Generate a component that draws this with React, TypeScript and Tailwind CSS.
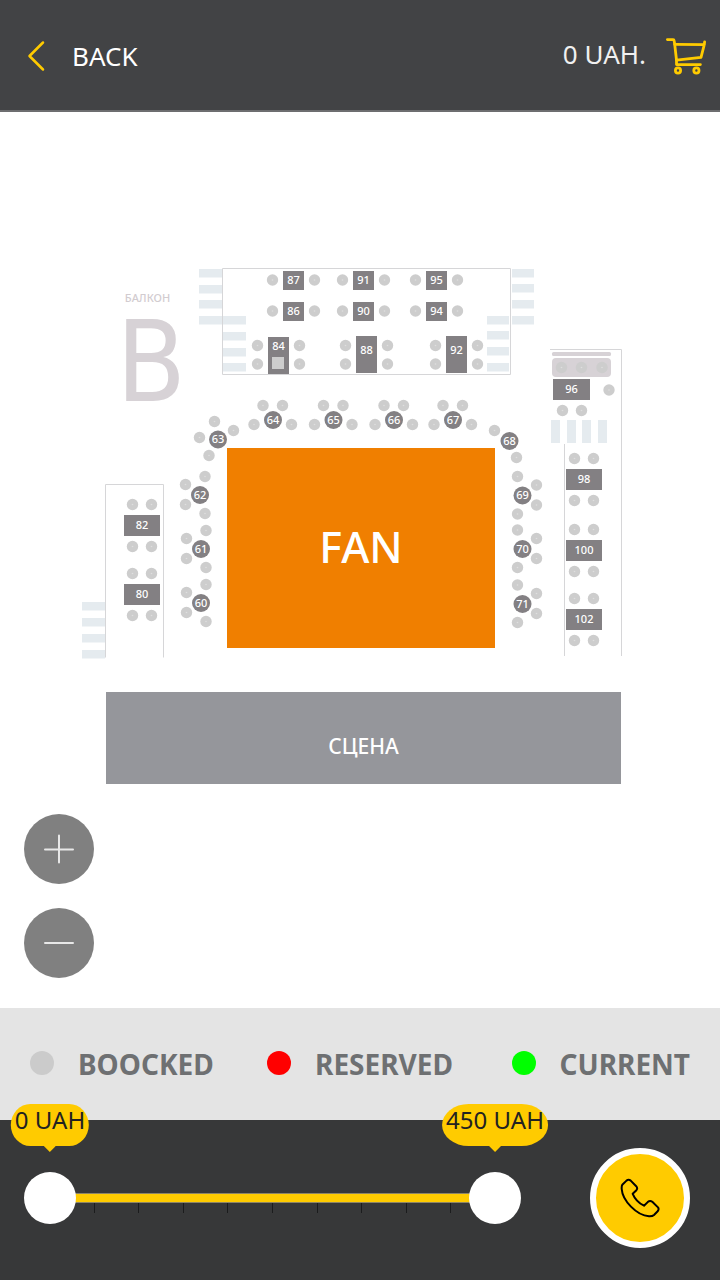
import { useState } from "react";

type Point = [number, number];

interface BoxTable {
  id: number;
  x: number;
  y: number;
  w: number;
  h: number;
  labelY?: number;
  seats: Point[];
}

interface RoundTable {
  id: number;
  x: number;
  y: number;
  seats: Point[];
}

const MAX_PRICE = 450;
const TICKS = [1, 2, 3, 4, 5, 6, 7, 8, 9];

const row = (id: number, x: number, y: number): BoxTable => ({
  id, x, y, w: 21, h: 19,
  seats: [[x - 10.5, y + 9], [x + 31.5, y + 9]],
});

const tall = (id: number, x: number, y: number): BoxTable => ({
  id, x, y, w: 21, h: 37, labelY: id === 84 ? 346 : 350,
  seats: [[x - 10.5, 345.5], [x + 31.5, 345.5], [x - 10.5, 364], [x + 31.5, 364]],
});

const wide = (id: number, x: number, y: number): BoxTable => ({
  id, x, y, w: 36, h: 21,
  seats: [[x + 8.5, y - 10.5], [x + 27.5, y - 10.5], [x + 8.5, y + 31.5], [x + 27.5, y + 31.5]],
});

const boxTables: BoxTable[] = [
  row(87, 283, 271), row(91, 353, 271), row(95, 426, 271),
  row(86, 283, 302), row(90, 353, 302), row(94, 426, 302),
  tall(84, 268, 337), tall(88, 356, 336), tall(92, 446, 336),
  wide(82, 124, 515), wide(80, 124, 584),
  wide(98, 566, 469), wide(100, 566, 540), wide(102, 566, 609),
  {
    id: 96, x: 553, y: 379, w: 37, h: 21,
    seats: [[561.5, 367.5], [581.5, 367.5], [602, 367.5], [609, 390], [562.5, 410.5], [581.5, 410.5]],
  },
];

const top = (id: number, x: number): RoundTable => ({
  id, x, y: 420,
  seats: [[x - 10, 405.5], [x + 9.5, 405.5], [x - 19, 424.5], [x + 18.5, 424.5]],
});

const left = (id: number, x: number, y: number): RoundTable => ({
  id, x, y,
  seats: [[x + 5, y - 18.5], [x - 14.5, y - 10.5], [x - 14.5, y + 9.5], [x + 5, y + 18.5]],
});

const right = (id: number, x: number, y: number): RoundTable => ({
  id, x, y,
  seats: [[x - 5, y - 19], [x + 14, y - 10.5], [x + 14, y + 9.5], [x - 5, y + 18.5]],
});

const roundTables: RoundTable[] = [
  top(64, 273), top(65, 333.5), top(66, 394), top(67, 453),
  left(62, 200, 495), left(61, 201, 549), left(60, 201, 603),
  right(69, 522.5, 495.5), right(70, 522.5, 549), right(71, 522.5, 604),
  { id: 63, x: 218, y: 439.5, seats: [[214.5, 421.5], [233.5, 430.5], [199.5, 437.5], [209, 455.5]] },
  { id: 68, x: 509.5, y: 441, seats: [[494.5, 430.5], [516.5, 457.5]] },
];

const stairs: { x: number; w: number; ys: number[] }[] = [
  { x: 199, w: 23, ys: [269, 285, 300, 316] },
  { x: 223, w: 23, ys: [316, 332, 348, 363] },
  { x: 512, w: 22, ys: [269, 284, 300, 316] },
  { x: 487, w: 22, ys: [316, 331, 347, 363] },
  { x: 82, w: 23, ys: [602, 618, 634, 650] },
];

function Seats({ seats }: { seats: Point[] }) {
  return (
    <>
      {seats.map(([x, y]) => (
        <g key={`${x}-${y}`}>
          <circle cx={x} cy={y} r="5.7" fill="#cdcdcd" />
          <circle cx={x} cy={y} r="0.8" fill="#dedede" />
        </g>
      ))}
    </>
  );
}

function SeatMap() {
  return (
    <svg
      viewBox="0 112 720 688"
      className="block w-full font-['Noto_Sans','Open_Sans',sans-serif] font-medium"
      role="img"
      aria-label="Seat map"
      textAnchor="middle"
    >
      <g fill="none" stroke="#d6d6d8" strokeWidth="1">
        <path d="M222.5 268.5H510.5V374.5H222.5Z" />
        <path d="M105.5 657.500V484.500H163.500V657.500" />
        <path d="M550 349.500H621.500V656M564.500 444V656" />
      </g>
      <g fill="#e5ebef">
        {stairs.map((s) =>
          s.ys.map((y) => <rect key={`${s.x}-${y}`} x={s.x} y={y} width={s.w} height="8.500" />),
        )}
        {[551, 567, 582, 598].map((x) => (
          <rect key={x} x={x} y="420" width="9" height="23" />
        ))}
      </g>
      <rect x="552" y="352" width="59" height="4" rx="1.500" fill="#d7d2d6" />
      <rect x="552" y="358" width="59" height="19" rx="4" fill="#d7d2d6" />

      <text x="147.500" y="302" fontSize="11" fill="#d2ccd0">БАЛКОН</text>
      <text x="151" y="401" fontSize="113" fill="#d7d2d6" className="font-['DejaVu_Sans_Condensed','DejaVu_Sans',sans-serif] font-normal">В</text>

      {boxTables.map((t) => (
        <g key={t.id}>
          <Seats seats={t.seats} />
          <rect x={t.x} y={t.y} width={t.w} height={t.h} fill="#838083" />
          <text x={t.x + t.w / 2} y={Math.floor(t.labelY ?? t.y + t.h / 2) + 4} fontSize="11" fill="#fff">
            {t.id}
          </text>
        </g>
      ))}
      <rect x="272" y="357" width="12" height="12" fill="#cdcdcd" />

      {roundTables.map((t) => (
        <g key={t.id}>
          <Seats seats={t.seats} />
          <circle cx={t.x} cy={t.y} r="9" fill="#838083" />
          <text x={t.x} y={Math.floor(t.y) + 4} fontSize="11" fill="#fff">{t.id}</text>
        </g>
      ))}

      <rect x="227" y="448" width="268" height="200" fill="#f07f00" />
      <text x="361" y="563" fontSize="43" fill="#fff">FAN</text>
      <rect x="106" y="692" width="515" height="92" fill="#95969b" />
      <text x="363.500" y="754" fontSize="21" fill="#fff">СЦЕНА</text>
    </svg>
  );
}

function PriceBubble({ value }: { value: number }) {
  return (
    <div
      className="absolute bottom-full mb-5 flex h-12 -translate-x-1/2 flex-col items-center"
      style={{ left: `${(value / MAX_PRICE) * 100}%` }}
    >
      <output className="h-[42px] bg-[#ffcb00] px-1 text-[24px] leading-8 whitespace-nowrap text-[#222] [border-radius:25%/50%]">
        {value} UAH
      </output>
      <svg viewBox="0 0 12 6" className="h-1.5 w-3 fill-[#ffcb00]" aria-hidden="true">
        <path d="M0 0H12L6 6Z" />
      </svg>
    </div>
  );
}

const rangeClass =
  "pointer-events-none absolute inset-0 m-0 h-[52px] w-full appearance-none bg-transparent outline-none [&::-webkit-slider-thumb]:pointer-events-auto [&::-webkit-slider-thumb]:size-[52px] [&::-webkit-slider-thumb]:cursor-pointer [&::-webkit-slider-thumb]:appearance-none [&::-webkit-slider-thumb]:rounded-full [&::-webkit-slider-thumb]:bg-white";

function PriceRange() {
  const [low, setLow] = useState(0);
  const [high, setHigh] = useState(MAX_PRICE);
  return (
    <div className="relative h-[52px] max-w-[497px] flex-1">
      <div className="relative mx-[26px] h-full pt-[21px]">
        <div className="h-2.5 border-y border-[#8d8566] bg-[#ffcb00]" />
        <div className="flex justify-evenly">
          {TICKS.map((t) => (
            <span key={t} className="h-2.5 w-px bg-[#1b1c1d]" />
          ))}
        </div>
        <div className="absolute inset-x-0 top-0">
          <PriceBubble value={low} />
          <PriceBubble value={high} />
        </div>
      </div>
      <input
        type="range" aria-label="Minimum price" min={0} max={MAX_PRICE} value={low}
        onChange={(e) => setLow(Math.min(Number(e.target.value), high))}
        className={rangeClass}
      />
      <input
        type="range" aria-label="Maximum price" min={0} max={MAX_PRICE} value={high}
        onChange={(e) => setHigh(Math.max(Number(e.target.value), low))}
        className={rangeClass}
      />
    </div>
  );
}

const legend = [
  { label: "BOOCKED", dot: "bg-[#cbcbcb]" },
  { label: "RESERVED", dot: "bg-[#ff0000]" },
  { label: "CURRENT", dot: "bg-[#00ff00]" },
];

export default function App() {
  return (
    <div className="flex min-h-screen flex-col bg-white font-['Noto_Sans','Open_Sans',sans-serif]">
      <header className="flex h-28 items-center justify-between border-b-2 border-[#6d6e70] bg-[#424345] pt-0.5 pr-3.5 pl-6 text-[26px] text-white">
        <button type="button" className="flex items-center gap-6">
          <svg viewBox="0 0 24 32" className="h-8 w-6" fill="none" stroke="#ffcb00" strokeWidth="2.500" strokeLinecap="round" strokeLinejoin="round" aria-hidden="true">
            <path d="M19 2.500L5.500 16L19 29.500" />
          </svg>
          <span>BACK</span>
        </button>
        <div className="flex items-center gap-5">
          <span className="pb-1 text-[#f0f0f0]">0 UAH.</span>
          <button type="button" aria-label="Cart">
            <svg viewBox="0 0 40 38" className="h-[38px] w-10" fill="none" stroke="#ffcb00" strokeWidth="2.800" strokeLinecap="round" strokeLinejoin="round" aria-hidden="true">
              <path d="M1.400 2.600H7.200Q8 2.600 8.100 3.600L8.700 7.300L10.500 23V27.600H34.400" />
              <path d="M8.700 7.300L38.400 7.700M38.600 5L38.200 8L35 20.300L10.500 23.200" />
              <circle cx="12" cy="33.500" r="2.600" />
              <circle cx="30.400" cy="33.500" r="2.600" />
            </svg>
          </button>
        </div>
      </header>

      <main className="flex-1">
        <div className="mx-auto max-w-[720px]">
          <SeatMap />
        </div>
        <div className="flex flex-col items-start gap-6 px-6 pt-3.5 pb-[30px]">
          <button type="button" aria-label="Zoom in" className="flex size-[70px] items-center justify-center rounded-full bg-[#808080]">
            <svg viewBox="0 0 30 30" className="size-[30px]" stroke="#e8e8e8" strokeWidth="2" strokeLinecap="round" aria-hidden="true">
              <path d="M1 15.500H29M15 1.500V28.500" />
            </svg>
          </button>
          <button type="button" aria-label="Zoom out" className="flex size-[70px] items-center justify-center rounded-full bg-[#808080]">
            <svg viewBox="0 0 30 30" className="size-[30px]" stroke="#e8e8e8" strokeWidth="2" strokeLinecap="round" aria-hidden="true">
              <path d="M1 15H29" />
            </svg>
          </button>
        </div>
      </main>

      <ul className="grid h-28 grid-cols-[1fr_auto_1fr] items-center bg-[#e4e4e4] px-[30px] text-[28px] font-bold text-[#6e7072]">
        {legend.map((item) => (
          <li key={item.label} className="flex items-center gap-6 last:justify-end">
            <span className={`-mt-0.5 size-6 rounded-full ${item.dot}`} />
            {item.label}
          </li>
        ))}
      </ul>

      <footer className="flex h-40 items-center justify-between gap-6 bg-[#373839] pr-[30px] pb-1 pl-6">
        <PriceRange />
        <button type="button" aria-label="Call" className="flex size-[100px] shrink-0 items-center justify-center rounded-full border-[6px] border-white bg-[#ffcb00]">
          <svg viewBox="0 0 40 40" className="size-10" fill="none" stroke="#000" strokeWidth="2" strokeLinejoin="round" aria-hidden="true">
            <path d="M2.300 6.800L6.500 2.600Q8.600 1 10.700 2.600L16.200 8.200Q18 10.200 16.400 12.200L12.700 15.800C14.600 20.400 19.200 25.300 24 27.700L27.700 24.100Q30 22 32.300 23.800L38 29.400Q39.200 31.100 37.900 33L34 37Q32.400 38.500 29 38.300C16.500 37.500 2.500 22.500 1.700 11Q1.500 8.200 2.300 6.800Z" />
          </svg>
        </button>
      </footer>
    </div>
  );
}
